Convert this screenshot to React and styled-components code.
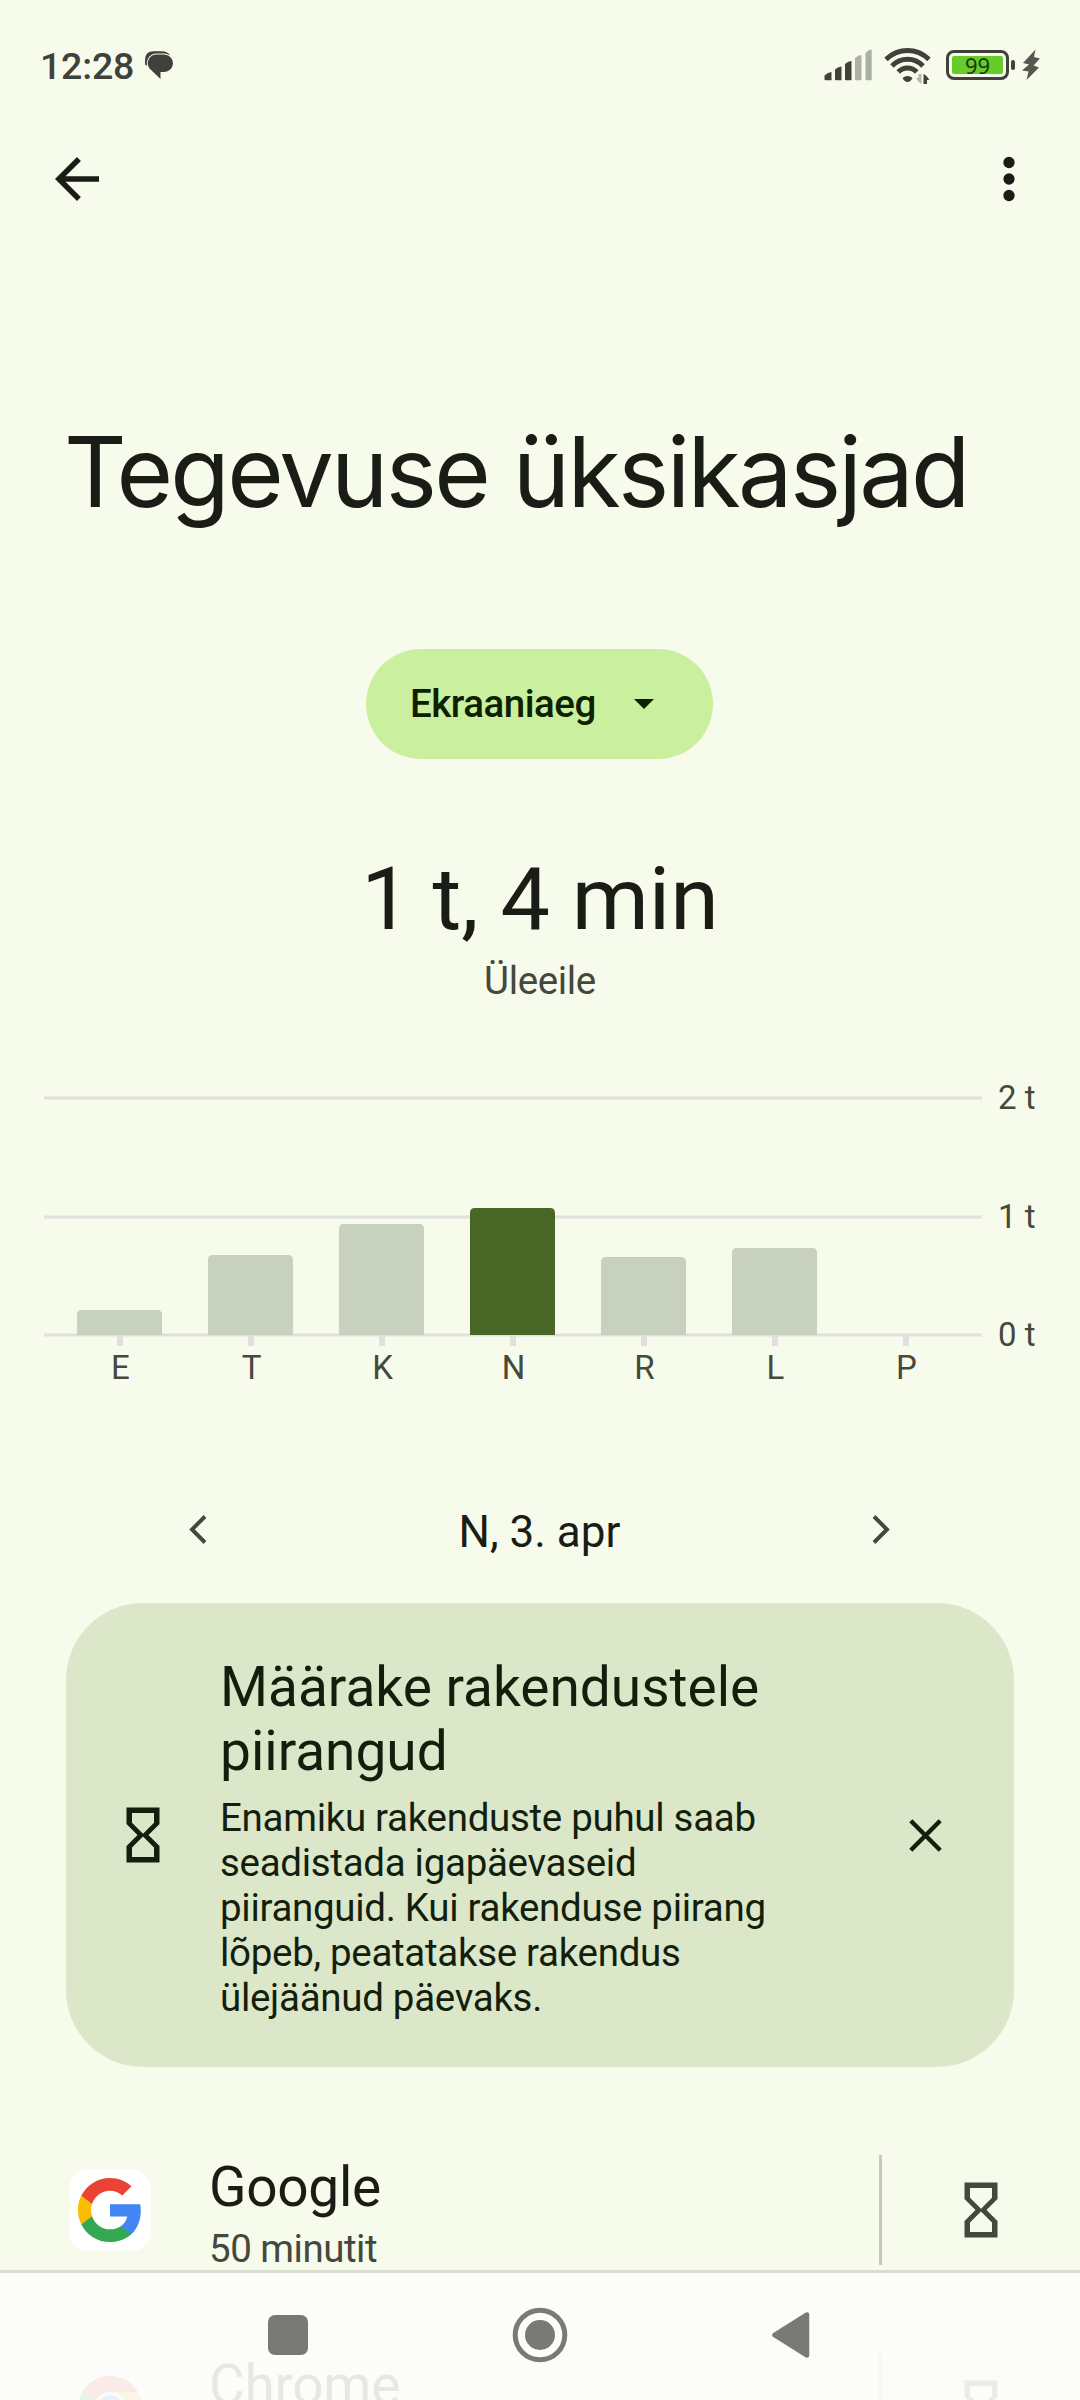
import styled, { createGlobalStyle } from 'styled-components';

const days = [
  { label: 'E', height: 25 },
  { label: 'T', height: 80 },
  { label: 'K', height: 111 },
  { label: 'N', height: 127, selected: true },
  { label: 'R', height: 78 },
  { label: 'L', height: 87 },
  { label: 'P', height: 0 },
];

const apps = [
  { name: 'Google', time: '50 minutit', logo: 'google' },
  { name: 'Chrome', time: '', logo: 'chrome' },
];

const MessageIcon = () => (
  <svg width="30" height="30" viewBox="0 0 30 30">
    <path d="M1 14V10Q1 1.200 9.500 1.200H18Q23 1.200 26 5L8 16L2.500 15.500Q1 15 1 14z" fill="#40413a" />
    <path
      d="M12.500 4.500h7.500a9 9 0 0 1 9 8.800 8.800 8.800 0 0 1-9 8.700h-3.500v7L5.500 18.500A8.800 8.800 0 0 1 12.500 4.500z"
      fill="#40413a"
      stroke="#f7fbeb"
      strokeWidth="2"
      paintOrder="stroke"
    />
  </svg>
);

const SignalIcon = () => (
  <svg width="49" height="32" viewBox="0 0 49 32">
    <g fill="#40413a">
      <path d="M.5 26.500Q4 23 7.500 23V31.300H1.500Q.5 31.300 .5 30z" />
      <path d="M11 20.500Q14.500 17.500 17.500 17.500V31.300H12Q11 31.300 11 30z" />
      <path d="M21 15Q24.500 12 27.500 12V31.300H22Q21 31.300 21 30z" />
    </g>
    <g fill="#adb0a5">
      <path d="M31 9Q34.500 6 37.500 6V31.300H32Q31 31.300 31 30z" />
      <path d="M41.500 4Q44.500 .6 47.700 .6V31.300H42.500Q41.500 31.300 41.500 30z" />
    </g>
  </svg>
);

const WifiIcon = () => (
  <svg width="48" height="38" viewBox="0 0 48 38">
    <g fill="none" stroke="#40413a" strokeWidth="5">
      <path d="M2 13.300Q11.500 4.500 23.500 4.500T45 13.300" />
      <path d="M8 20Q14.500 13.300 23.500 13.300T39 20" />
      <path d="M14.300 26Q18 22 23.500 22T32.700 26" />
    </g>
    <path d="M18.500 32Q23.500 27.800 28.500 32Q26.500 36 23.500 36T18.500 32z" fill="#40413a" />
    <path d="M37.500 28v9.500q-2.500-.5-5.500-5.500h2.500v-4z" fill="#b4b7aa" />
    <path d="M39.500 38V28q3 .8 5.800 6H43v4z" fill="#40413a" />
  </svg>
);

const BoltIcon = () => (
  <svg width="20" height="32" viewBox="0 0 20 32">
    <path d="M14.500.5L2 14l6 1.500L1 21.500l6.500 1L5.500 31 18 18.500l-5.500-2L19 9.500l-6-1.500z" fill="#555750" />
  </svg>
);

const BackIcon = () => (
  <svg width="66" height="66" viewBox="0 0 24 24" fill="#1a1c16">
    <path d="M20 11H7.830l5.590-5.590L12 4l-8 8 8 8 1.410-1.410L7.830 13H20v-2z" />
  </svg>
);

const MoreIcon = () => (
  <svg width="66" height="66" viewBox="0 0 24 24" fill="#1a1c16">
    <circle cx="12" cy="6" r="2.050" />
    <circle cx="12" cy="12" r="2.050" />
    <circle cx="12" cy="18" r="2.050" />
  </svg>
);

const HourglassIcon = ({ color }) => (
  <svg width="66" height="66" viewBox="0 0 24 24" fill={color}>
    <path d="M6 2v6l4 4-4 4v6h12v-6l-4-4 4-4V2H6zm10 14.500V20H8v-3.500l4-4 4 4zm-4-5l-4-4V4h8v3.500l-4 4z" />
  </svg>
);

const CloseIcon = () => (
  <svg width="55" height="55" viewBox="0 0 55 55">
    <path d="M12.800 12.800l29.400 29.400M42.200 12.800L12.800 42.200" stroke="#131f0d" strokeWidth="4.400" />
  </svg>
);

const ChevronIcon = ({ flip }) => (
  <svg width="55" height="55" viewBox="0 0 55 55">
    <path
      d={flip ? 'M21 14.500l13 13-13 13' : 'M34 14.500l-13 13 13 13'}
      fill="none"
      stroke="#44483d"
      strokeWidth="3.900"
    />
  </svg>
);

const GoogleLogo = () => (
  <svg width="70" height="70" viewBox="0 0 24 24">
    <path fill="#4285f4" d="M22.560 12.250c0-.78-.07-1.530-.2-2.250H12v4.260h5.920c-.26 1.370-1.040 2.530-2.210 3.310v2.770h3.570c2.080-1.920 3.280-4.740 3.280-8.090z" />
    <path fill="#34a853" d="M12 23c2.970 0 5.460-.98 7.280-2.660l-3.570-2.770c-.98.66-2.230 1.060-3.710 1.060-2.860 0-5.290-1.930-6.160-4.530H2.180v2.840C3.990 20.530 7.700 23 12 23z" />
    <path fill="#fbbc05" d="M5.840 14.090c-.22-.66-.35-1.360-.35-2.090s.13-1.430.35-2.090V7.070H2.180C1.430 8.550 1 10.220 1 12s.43 3.450 1.180 4.930l2.850-2.220.81-.62z" />
    <path fill="#ea4335" d="M12 5.380c1.620 0 3.060.56 4.210 1.640l3.150-3.150C17.450 2.090 14.970 1 12 1 7.700 1 3.990 3.470 2.180 7.070l3.660 2.840c.87-2.600 3.300-4.530 6.160-4.530z" />
  </svg>
);

const ChromeLogo = () => (
  <svg width="70" height="70" viewBox="0 0 70 70">
    <circle cx="35" cy="35" r="32" fill="#34a853" />
    <path d="M7.300 19A32 32 0 0 1 62.700 19L35 35z" fill="#ea4335" />
    <path d="M35 19h27.700A32 32 0 0 1 35 67l14-24z" fill="#fbbc05" />
    <circle cx="35" cy="35" r="16" fill="#fff" />
    <circle cx="35" cy="35" r="12.700" fill="#4285f4" />
  </svg>
);

// Baseline sits at y=257, one hour is 118 units tall
const BarPlot = () => (
  <svg width="938" height="270" viewBox="0 0 938 270">
    {[20, 139, 257].map((y) => (
      <rect key={y} x="0" y={y - 1.5} width="938" height="3" fill="#e0e1dd" />
    ))}
    {days.map(({ label, height, selected }, i) => {
      const x = 33 + i * 131;
      const top = 257 - height;
      return (
        <g key={label}>
          <rect x={x + 40} y="258" width="6" height="10" fill="#e0e0e0" />
          {height > 0 && (
            <path
              d={`M${x} 257V${top + 5}q0-5 5-5h75q5 0 5 5V257z`}
              fill={selected ? '#486727' : '#c8d0be'}
            />
          )}
        </g>
      );
    })}
  </svg>
);

const App = () => (
  <Screen>
    <GlobalStyle />
    <StatusBar>
      <Clock>12:28</Clock>
      <MessageIcon />
      <StatusIcons>
        <SignalIcon />
        <WifiIcon />
        <Battery>
          <BatteryLevel>99</BatteryLevel>
        </Battery>
        <BatteryTip />
        <BoltIcon />
      </StatusIcons>
    </StatusBar>
    <TopBar>
      <IconButton aria-label="Tagasi">
        <BackIcon />
      </IconButton>
      <IconButton aria-label="Rohkem valikuid">
        <MoreIcon />
      </IconButton>
    </TopBar>
    <Title>Tegevuse üksikasjad</Title>
    <Chip>
      <ChipLabel>Ekraaniaeg</ChipLabel>
      <Caret width="20" height="10" viewBox="0 0 20 10">
        <path d="M0 0h20L10 10z" fill="#0d2000" />
      </Caret>
    </Chip>
    <Total>1 t, 4 min</Total>
    <TotalDay>Üleeile</TotalDay>
    <Chart>
      <BarPlot />
      <HourLabels>
        <span>2 t</span>
        <span>1 t</span>
        <span>0 t</span>
      </HourLabels>
    </Chart>
    <DayLabels>
      {days.map(({ label }) => (
        <span key={label}>{label}</span>
      ))}
    </DayLabels>
    <DateNav>
      <IconButton aria-label="Eelmine päev">
        <ChevronIcon />
      </IconButton>
      <DateText>N, 3. apr</DateText>
      <IconButton aria-label="Järgmine päev">
        <ChevronIcon flip />
      </IconButton>
    </DateNav>
    <TipCard>
      <HourglassIcon color="#131f0d" />
      <TipText>
        <TipTitle>Määrake rakendustele piirangud</TipTitle>
        <TipBody>
          Enamiku rakenduste puhul saab seadistada igapäevaseid piiranguid. Kui
          rakenduse piirang lõpeb, peatatakse rakendus ülejäänud päevaks.
        </TipBody>
      </TipText>
      <IconButton aria-label="Sule">
        <CloseIcon />
      </IconButton>
    </TipCard>
    {apps.map(({ name, time, logo }) => (
      <AppRow key={name}>
        <AppIcon>{logo === 'google' ? <GoogleLogo /> : <ChromeLogo />}</AppIcon>
        <AppText>
          <AppName>{name}</AppName>
          <AppTime>{time}</AppTime>
        </AppText>
        <Divider />
        <IconButton aria-label="Määra piirang">
          <HourglassIcon color="#44483d" />
        </IconButton>
      </AppRow>
    ))}
    <NavBar>
      <svg width="40" height="40" viewBox="0 0 40 40">
        <rect width="40" height="40" rx="7" fill="#797977" />
      </svg>
      <svg width="56" height="56" viewBox="0 0 56 56">
        <circle cx="28" cy="28" r="24.800" fill="none" stroke="#797977" strokeWidth="5" />
        <circle cx="28" cy="28" r="15" fill="#797977" />
      </svg>
      <svg width="38" height="46" viewBox="0 0 38 46">
        <path d="M2.500 23L35 2.500v41z" fill="#797977" stroke="#797977" strokeWidth="4.500" strokeLinejoin="round" />
      </svg>
    </NavBar>
  </Screen>
);

export default App;

const GlobalStyle = createGlobalStyle`
  body {
    margin: 0;
    background: #f7fbeb;
  }

  * {
    box-sizing: border-box;
  }

  svg {
    display: block;
    flex-shrink: 0;
  }
`;

const Screen = styled.div`
  display: flex;
  flex-direction: column;
  width: 1080px;
  height: 2400px;
  overflow: hidden;
  background: #f7fbeb;
  color: #1a1c16;
  font-family: Roboto, sans-serif;
`;

const StatusBar = styled.div`
  display: flex;
  align-items: center;
  flex-shrink: 0;
  height: 130px;
  padding: 0 39px 0 40px;
  color: #40413a;
`;

const Clock = styled.span`
  width: 104px;
  padding-top: 2px;
  font-size: 37.5px;
  font-weight: 500;
  line-height: 44px;
  letter-spacing: -0.2px;
`;

const StatusIcons = styled.div`
  display: flex;
  align-items: center;
  margin-left: auto;

  > svg + svg {
    margin-left: 11px;
  }
`;

const Battery = styled.div`
  width: 63px;
  height: 30px;
  margin-left: 14px;
  padding: 3px;
  border: 3px solid #40413a;
  border-radius: 8px;
`;

const BatteryLevel = styled.div`
  height: 18px;
  border-radius: 2px;
  background: #67cb2c;
  color: #1c3a0a;
  font-family: 'Noto Sans', sans-serif;
  font-size: 22px;
  line-height: 19px;
  text-align: center;
`;

const BatteryTip = styled.div`
  width: 4px;
  height: 10px;
  margin: 0 6px 0 2px;
  border-radius: 2px;
  background: #40413a;
`;

const TopBar = styled.div`
  display: flex;
  align-items: center;
  justify-content: space-between;
  flex-shrink: 0;
  height: 98px;
  padding: 0 38px 0 44px;
`;

const IconButton = styled.button`
  flex-shrink: 0;
  padding: 0;
  border: none;
  background: none;
`;

const Title = styled.h1`
  margin: 184px 0 0 64px;
  font-family: Inter, sans-serif;
  font-size: 97px;
  font-weight: 400;
  line-height: 120px;
  letter-spacing: -2.65px;
  white-space: nowrap;
`;

const Chip = styled.button`
  display: flex;
  align-items: center;
  justify-content: space-between;
  flex-shrink: 0;
  width: 347px;
  height: 110px;
  margin: 117px 0 0 366px;
  padding: 0 59px 0 44px;
  border: none;
  border-radius: 55px;
  background: #c9ef9f;
  color: #0d2000;
  font-family: inherit;
`;

const ChipLabel = styled.span`
  padding-bottom: 2px;
  font-size: 38.5px;
  font-weight: 500;
  letter-spacing: -0.5px;
`;

const Caret = styled.svg`
  margin-left: auto;
`;

const Total = styled.div`
  margin-top: 88px;
  font-size: 88px;
  line-height: 104px;
  text-align: center;
`;

const TotalDay = styled.div`
  margin-top: 7px;
  color: #44483d;
  font-size: 38.5px;
  line-height: 46px;
  letter-spacing: -0.35px;
  text-align: center;
`;

const Chart = styled.div`
  display: flex;
  flex-shrink: 0;
  height: 270px;
  margin-top: 74px;
  padding-left: 44px;
`;

const HourLabels = styled.div`
  display: flex;
  flex-direction: column;
  justify-content: space-between;
  height: 277px;
  margin-left: 16px;
  color: #44483d;
  font-size: 33px;
  line-height: 40px;
`;

const DayLabels = styled.div`
  display: grid;
  grid-template-columns: repeat(7, 131px);
  padding-left: 55px;
  color: #44483d;
  font-size: 33px;
  line-height: 40px;
  text-align: center;
`;

const DateNav = styled.div`
  display: flex;
  align-items: center;
  justify-content: space-between;
  flex-shrink: 0;
  height: 148px;
  margin-top: 67px;
  padding: 0 172px 0 171px;
`;

const DateText = styled.span`
  padding-top: 5px;
  font-size: 44px;
  line-height: 52px;
`;

const TipCard = styled.section`
  display: flex;
  align-items: center;
  flex-shrink: 0;
  height: 464px;
  margin: 0 66px;
  padding: 0 61px 0 44px;
  border-radius: 77px;
  background: #dce7ca;
  color: #131f0d;
`;

const TipText = styled.div`
  width: 570px;
  margin: 0 auto 0 44px;
  padding-top: 5px;
`;

const TipTitle = styled.h2`
  margin: 0;
  font-size: 55px;
  font-weight: 400;
  line-height: 64px;
`;

const TipBody = styled.p`
  margin: 12px 0 0;
  font-size: 38.5px;
  line-height: 45px;
  letter-spacing: -0.3px;
`;

const AppRow = styled.div`
  display: flex;
  align-items: center;
  flex-shrink: 0;
  height: 198px;
  padding: 0 66px 0 69px;

  ${TipCard} + & {
    margin-top: 44px;
  }
`;

const AppIcon = styled.div`
  display: flex;
  align-items: center;
  justify-content: center;
  width: 82px;
  height: 82px;
  border-radius: 20px;
  background: #fff;
`;

const AppText = styled.div`
  flex: 1;
  margin-left: 58px;
  padding-top: 7px;
`;

const AppName = styled.div`
  font-size: 55px;
  line-height: 64px;
  letter-spacing: -0.3px;
`;

const AppTime = styled.div`
  min-height: 46px;
  margin-top: 7px;
  color: #44483d;
  font-size: 38.5px;
  line-height: 46px;
  letter-spacing: -0.5px;
`;

const Divider = styled.div`
  width: 3px;
  height: 110px;
  margin-right: 66px;
  background: #c5c8ba;
`;

// Translucent, so the list shows through while scrolling under it
const NavBar = styled.nav`
  position: fixed;
  bottom: 0;
  left: 0;
  display: flex;
  align-items: center;
  justify-content: space-between;
  width: 1080px;
  height: 130px;
  padding: 0 270px 3px 268px;
  border-top: 3px solid #dadccf;
  background: rgba(252, 252, 251, 0.91);
  background-clip: padding-box;
`;
